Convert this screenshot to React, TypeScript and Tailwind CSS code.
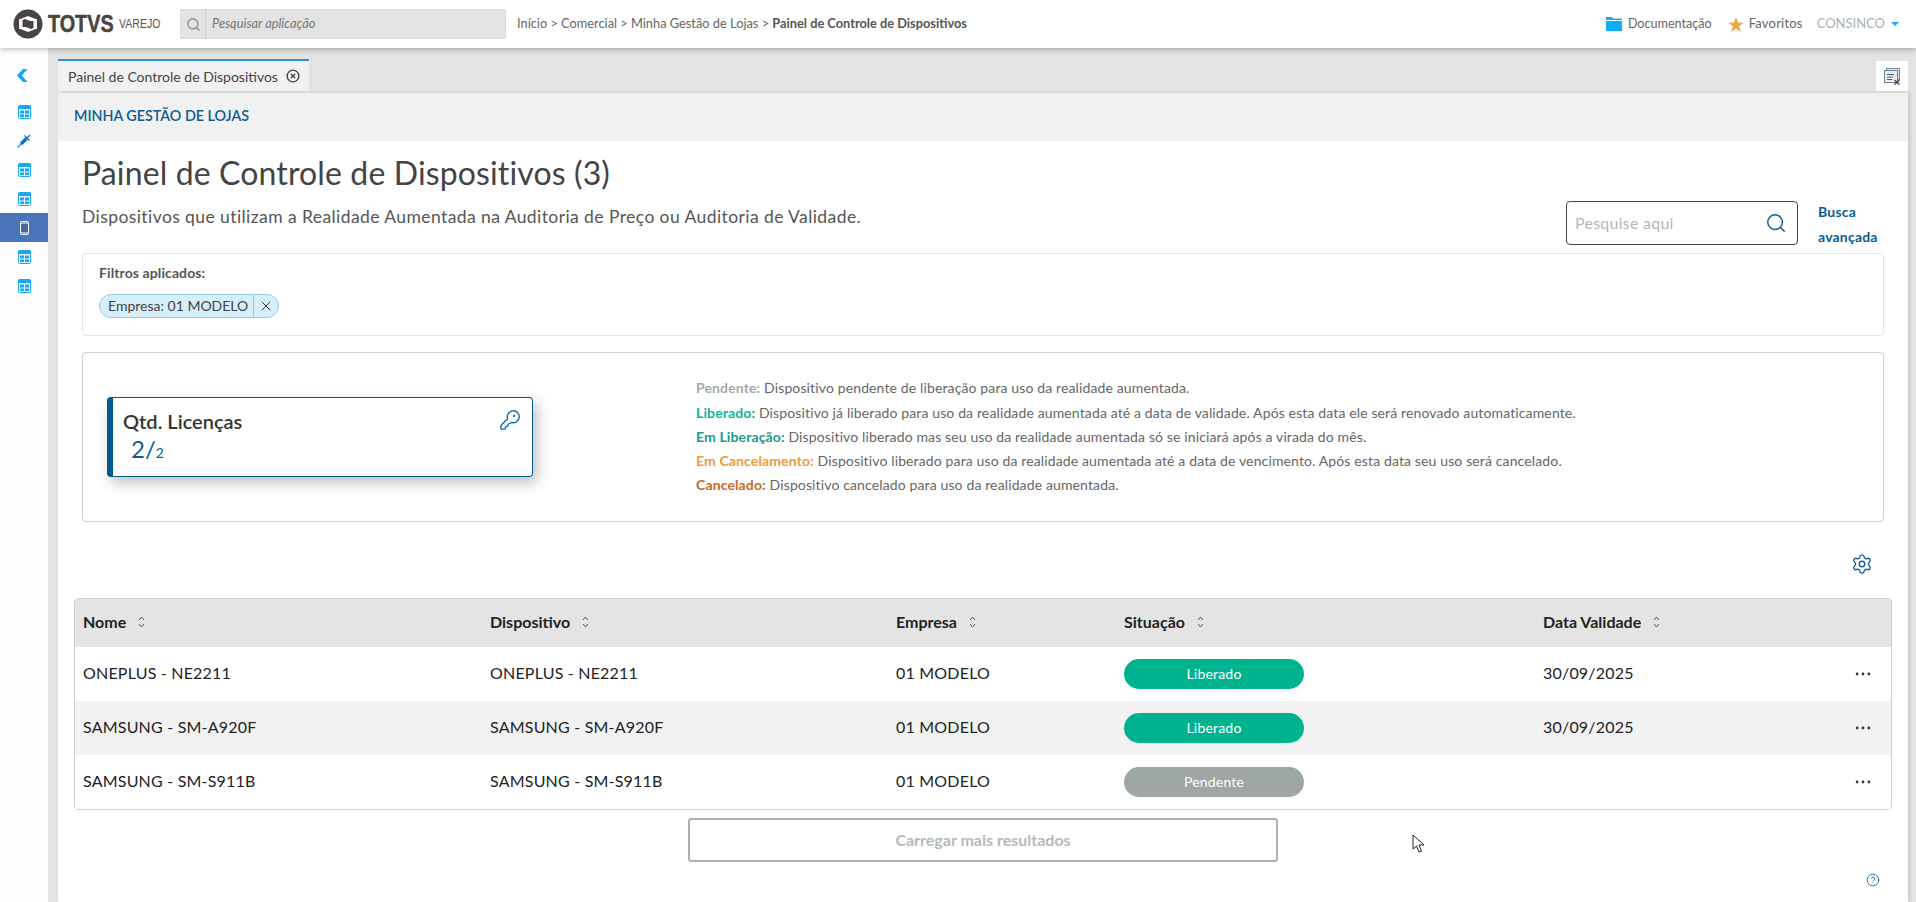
import { CircleHelp, CircleX, Ellipsis, KeyRound, Search, Settings, X } from 'lucide-react'

const font = "font-['Lato','Open_Sans',sans-serif]"

function GridIcon() {
  return (
    <svg width="13" height="14" viewBox="0 0 13 14" className="shrink-0">
      <rect x="0.5" y="0.5" width="12" height="13" rx="1" fill="#e8f6fe" stroke="#1aa7ee" />
      <rect x="0.5" y="0.5" width="12" height="3.5" fill="#1aa7ee" />
      <rect x="2" y="5.5" width="4" height="3" fill="#1aa7ee" />
      <rect x="7" y="5.5" width="4" height="3" fill="#1aa7ee" />
      <rect x="2" y="9.5" width="4" height="2.5" fill="#1aa7ee" />
      <rect x="7" y="9.5" width="4" height="2.5" fill="#1aa7ee" />
    </svg>
  )
}

function SyringeIcon() {
  return (
    <svg width="14" height="14" viewBox="0 0 14 14" fill="none" className="shrink-0">
      <path d="M0.5 13.5 L4.5 9.5" stroke="#2a8fd6" strokeWidth="1.2" />
      <path d="M4 10 L9.5 4.5" stroke="#1071b8" strokeWidth="3.4" />
      <path d="M7.5 1.5 L12.5 6.5 M10 4 L13 1" stroke="#1071b8" strokeWidth="1.2" />
    </svg>
  )
}

function PhoneIcon() {
  return (
    <svg width="9" height="14" viewBox="0 0 9 14" className="shrink-0">
      <rect x="0.5" y="0.5" width="8" height="13" rx="1" fill="#3f68ad" stroke="#fff" />
      <path d="M0.5 2 H8.5 M0.5 12 H8.5" stroke="#fff" strokeWidth="1.2" />
    </svg>
  )
}

function SortIcon() {
  return (
    <svg width="7" height="12" viewBox="0 0 7 12" fill="none" className="ml-3 shrink-0">
      <path d="M1 4 L3.5 1 L6 4 M1 8 L3.5 11 L6 8" stroke="#444" strokeWidth="0.9" />
    </svg>
  )
}

function Logo() {
  return (
    <div className="flex w-[180px] shrink-0 items-center pl-[13px]">
      <svg width="30" height="30" viewBox="0 0 30 30" className="shrink-0">
        <circle cx="15" cy="15" r="14.5" fill="#4a4543" />
        <path d="M6 10.5 L15 7 L24 10.5 L24 12 L17 12 L12 10 L9.5 11 L9.5 19 L6 19 Z" fill="#fff" />
        <path d="M24 19.5 L15 23 L6 19.5 L6 18 L13 18 L18 20 L20.5 19 L20.5 11 L24 11 Z" fill="#fff" />
        <rect x="11.5" y="13" width="7" height="4" fill="#4a4543" />
      </svg>
      <span className="ml-[5px] w-[62px] origin-left scale-x-[0.86] whitespace-nowrap font-['Liberation_Sans',sans-serif] text-[23px] font-bold leading-none text-[#4a4543] [-webkit-text-stroke:0.5px_#4a4543]">
        TOTVS
      </span>
      <span className="ml-[9px] w-[41px] origin-left scale-x-[0.88] font-['Liberation_Sans',sans-serif] text-[12px] leading-none text-[#5a5553]">VAREJO</span>
    </div>
  )
}

function TopBar() {
  return (
    <header className={`relative z-20 flex h-12 shrink-0 items-center bg-white pr-[17px] shadow-[0_1px_6px_rgba(0,0,0,0.3)] ${font}`}>
      <Logo />
      <div className="flex h-[30px] w-[326px] shrink-0 items-center rounded-[2px] border border-[#d8d8d8] bg-[#e3e3e3]">
        <div className="flex h-full w-[25px] items-center justify-center border-r border-[#cfcfcf]">
          <Search size={15} strokeWidth={2.5} className="text-[#9a9a9a]" />
        </div>
        <span className="ml-[6px] text-[12.8px] italic text-[#777]">Pesquisar aplicação</span>
      </div>
      <div className="ml-[11px] text-[12.8px] text-[#666]">
        Início &gt; Comercial &gt; Minha Gestão de Lojas &gt; <span className="font-bold text-[#555]">Painel de Controle de Dispositivos</span>
      </div>
      <div className="ml-auto flex items-center text-[13px] text-[#666]">
        <svg width="16" height="14" viewBox="0 0 16 14" className="mr-[6px]">
          <path d="M0 0 H6 L7 1.5 H16 V3 H0 Z M0 4 H16 V14 H0 Z" fill="#0cadf3" />
        </svg>
        <span className="text-[12.6px]">Documentação</span>
        <svg width="16" height="15" viewBox="0 0 16 15" className="ml-4 mr-[5px]">
          <path d="M8 0 L10 5.4 L16 5.7 L11.3 9.2 L12.9 15 L8 11.8 L3.1 15 L4.7 9.2 L0 5.7 L6 5.4 Z" fill="#eea94e" />
        </svg>
        <span className="tracking-[0.2px]">Favoritos</span>
        <span className="ml-[14px] text-[#a9b0b3]">CONSINCO</span>
        <span className="ml-[6px] h-0 w-0 border-x-4 border-t-4 border-x-transparent border-t-[#0cadf3]" />
      </div>
    </header>
  )
}

function Sidebar() {
  return (
    <aside className="flex w-12 shrink-0 flex-col items-center bg-[#fdfdfd] pt-[21px]">
      <svg width="11" height="13" viewBox="0 0 11 13" className="mb-[15px] -ml-[3px]">
        <path d="M6 0 L10.5 0 L4.8 6.5 L10.5 13 L6 13 L0 6.5 Z" fill="#0ba8f0" />
      </svg>
      {[0, 1, 2, 3, 4, 5, 6].map((i) => (
        <div key={i} className={`flex h-[29px] w-full items-center justify-center ${i === 4 ? 'bg-[#4a74b8]' : ''}`}>
          {i === 1 ? <SyringeIcon /> : i === 4 ? <PhoneIcon /> : <GridIcon />}
        </div>
      ))}
    </aside>
  )
}

function TabBar() {
  return (
    <div className="flex h-[45px] shrink-0 items-end justify-between pb-[2px]">
      <div className="flex h-8 w-[251px] items-center border-t-2 border-[#2b93d6] bg-[#f1f1f1] pl-[10px] text-[14px] text-[#444]">
        Painel de Controle de Dispositivos
        <CircleX size={14} strokeWidth={2.4} className="ml-2 text-[#444]" />
      </div>
      <div className="flex h-[30px] w-8 items-center justify-center bg-white">
        <svg width="18" height="17" viewBox="0 0 18 17" fill="none">
          <rect x="3.5" y="0.5" width="13" height="11" fill="#dfe6f0" stroke="#7a8aa0" />
          <rect x="1.5" y="2.5" width="13" height="12" fill="#e9eef5" stroke="#6c7f99" />
          <path d="M4 6.5 H11 M4 9 H10 M4 11.5 H9" stroke="#4a5a70" />
          <path d="M11.5 12 L16.5 16.5 M16.5 12 L11.5 16.5" stroke="#444" strokeWidth="1.4" />
        </svg>
      </div>
    </div>
  )
}

const legend = [
  ['Pendente:', 'text-[#a3a9a9]', 'Dispositivo pendente de liberação para uso da realidade aumentada.'],
  ['Liberado:', 'text-[#0fb392]', 'Dispositivo já liberado para uso da realidade aumentada até a data de validade. Após esta data ele será renovado automaticamente.'],
  ['Em Liberação:', 'text-[#1c9a8a]', 'Dispositivo liberado mas seu uso da realidade aumentada só se iniciará após a virada do mês.'],
  ['Em Cancelamento:', 'text-[#ee9a3a]', 'Dispositivo liberado para uso da realidade aumentada até a data de vencimento. Após esta data seu uso será cancelado.'],
  ['Cancelado:', 'text-[#c46a22]', 'Dispositivo cancelado para uso da realidade aumentada.'],
]

const rows = [
  { nome: 'ONEPLUS - NE2211', status: 'Liberado', data: '30/09/2025' },
  { nome: 'SAMSUNG - SM-A920F', status: 'Liberado', data: '30/09/2025' },
  { nome: 'SAMSUNG - SM-S911B', status: 'Pendente', data: '' },
]

const gridCols = 'grid grid-cols-[407px_406px_228px_419px_1fr_48px]'

function DeviceTable() {
  return (
    <div className="overflow-hidden rounded-[4px] border border-[#cfcfcf] bg-white text-[16px] text-[#222]">
      <div className={`${gridCols} h-[48px] items-center bg-[#e4e4e4] pb-[2px] pl-2 font-bold`}>
        {['Nome', 'Dispositivo', 'Empresa', 'Situação', 'Data Validade'].map((h) => (
          <div key={h} className="flex items-center">
            {h}
            <SortIcon />
          </div>
        ))}
      </div>
      {rows.map((r, i) => (
        <div key={r.nome} className={`${gridCols} h-[54px] items-center pl-2 tracking-[0.2px] ${i === 1 ? 'bg-[#f2f2f2]' : 'bg-white'}`}>
          <div className="pb-[2px]">{r.nome}</div>
          <div className="pb-[2px]">{r.nome}</div>
          <div className="pb-[2px]">01 MODELO</div>
          <div className={`flex h-[30px] w-[180px] items-center justify-center rounded-[15px] pb-[2px] text-[14px] text-white ${r.status === 'Liberado' ? 'bg-[#00b38f]' : 'bg-[#9fa6a6]'}`}>
            {r.status}
          </div>
          <div className="pb-[2px]">{r.data}</div>
          <Ellipsis size={20} strokeWidth={1.4} className="ml-[10px] text-[#333]" />
        </div>
      ))}
    </div>
  )
}

export default function App() {
  return (
    <div className={`relative flex h-[902px] flex-col overflow-hidden bg-[#e3e3e3] ${font}`}>
      <TopBar />
      <div className="flex min-h-0 flex-1">
        <Sidebar />
        <main className="ml-[10px] mr-2 flex min-w-0 flex-1 flex-col">
          <TabBar />
          <div className="flex flex-1 flex-col bg-white shadow-[2px_0_4px_rgba(0,0,0,0.12)]">
            <div className="flex h-12 shrink-0 items-center bg-[#f1f1f1] pb-[2px] pl-4 text-[14.3px] font-semibold text-[#0b5d92]">
              MINHA GESTÃO DE LOJAS
            </div>
            <div className="px-6">
              <div className="flex h-[112px] justify-between">
                <div className="pt-3">
                  <h1 className="text-[32px] leading-[40px] tracking-[0.13px] text-[#444]">Painel de Controle de Dispositivos (3)</h1>
                  <p className="mt-3 text-[17.5px] leading-6 tracking-[0.42px] text-[#555]">
                    Dispositivos que utilizam a Realidade Aumentada na Auditoria de Preço ou Auditoria de Validade.
                  </p>
                </div>
                <div className="flex pt-[60px]">
                  <div className="flex h-[44px] w-[232px] items-center justify-between rounded-[4px] border border-[#444] pl-2 pr-[10px] text-[16px] tracking-[0.25px] text-[#b5b5b5]">
                    Pesquise aqui
                    <Search size={22} strokeWidth={1.6} className="text-[#0b5d92]" />
                  </div>
                  <div className="-mt-[2px] ml-5 w-[66px] whitespace-nowrap text-[14px] font-bold leading-[25px] tracking-[0.2px] text-[#0b5d92]">
                    Busca
                    <br />
                    avançada
                  </div>
                </div>
              </div>
              <section className="h-[83px] rounded-[4px] border border-[#e3e3e3] pl-4 pt-[9px]">
                <div className="text-[14px] font-bold leading-5 tracking-[0.1px] text-[#555]">Filtros aplicados:</div>
                <div className="mt-[11px] flex h-6 w-[180px] items-center rounded-xl border border-[#8fcdf0] bg-[#d6effc] text-[14px] text-[#444]">
                  <span className="w-[154px] whitespace-nowrap border-r border-[#8fcdf0] pl-2 leading-[22px]">Empresa: 01 MODELO</span>
                  <X size={16} strokeWidth={1.5} className="ml-[4px] text-[#333]" />
                </div>
              </section>
              <section className="mt-4 flex h-[170px] items-center rounded-[4px] border border-[#cfcfcf] pl-6">
                <div className="flex h-20 w-[426px] shrink-0 justify-between rounded-[4px] border border-l-[6px] border-[#005a8c] bg-white pl-[10px] pr-[11px] pt-[11px] shadow-[4px_6px_14px_rgba(0,0,0,0.25)]">
                  <div>
                    <div className="text-[20px] font-semibold leading-[24px] text-[#333]">Qtd. Licenças</div>
                    <div className="mt-[3px] pl-2 text-[24px] leading-[26px] text-[#0b5d92]">
                      2/<span className="text-[14px]">2</span>
                    </div>
                  </div>
                  <KeyRound size={22} strokeWidth={1.5} className="text-[#0b6ea8]" />
                </div>
                <div className="ml-[163px] whitespace-nowrap text-[14px] leading-[24.3px] tracking-[0.13px] text-[#666]">
                  {legend.map(([label, color, text]) => (
                    <div key={label}>
                      <span className={`font-bold ${color}`}>{label}</span> {text}
                    </div>
                  ))}
                </div>
              </section>
            </div>
            <div className="px-4">
              <div className="flex h-[76px] items-end justify-end pb-[23px] pr-[19px]">
                <Settings size={22} strokeWidth={1.5} className="text-[#0b5d92]" />
              </div>
              <DeviceTable />
              <div className="mx-auto mt-2 flex h-11 w-[590px] items-center justify-center rounded-[3px] border-2 border-[#b0b0b0] text-[16px] font-bold text-[#b5b9bb]">
                Carregar mais resultados
              </div>
              <div className="flex justify-end pr-3 pt-[11px]">
                <CircleHelp size={14} strokeWidth={1.5} className="text-[#0b6ea8]" />
              </div>
            </div>
          </div>
        </main>
      </div>
      <svg width="14" height="20" viewBox="0 0 14 20" className="absolute left-[1412px] top-[834px]">
        <path d="M1 1 L1 15 L4.5 12 L7 18 L9.5 17 L7 11 L12 11 Z" fill="#fff" stroke="#222" strokeWidth="1" />
      </svg>
    </div>
  )
}
